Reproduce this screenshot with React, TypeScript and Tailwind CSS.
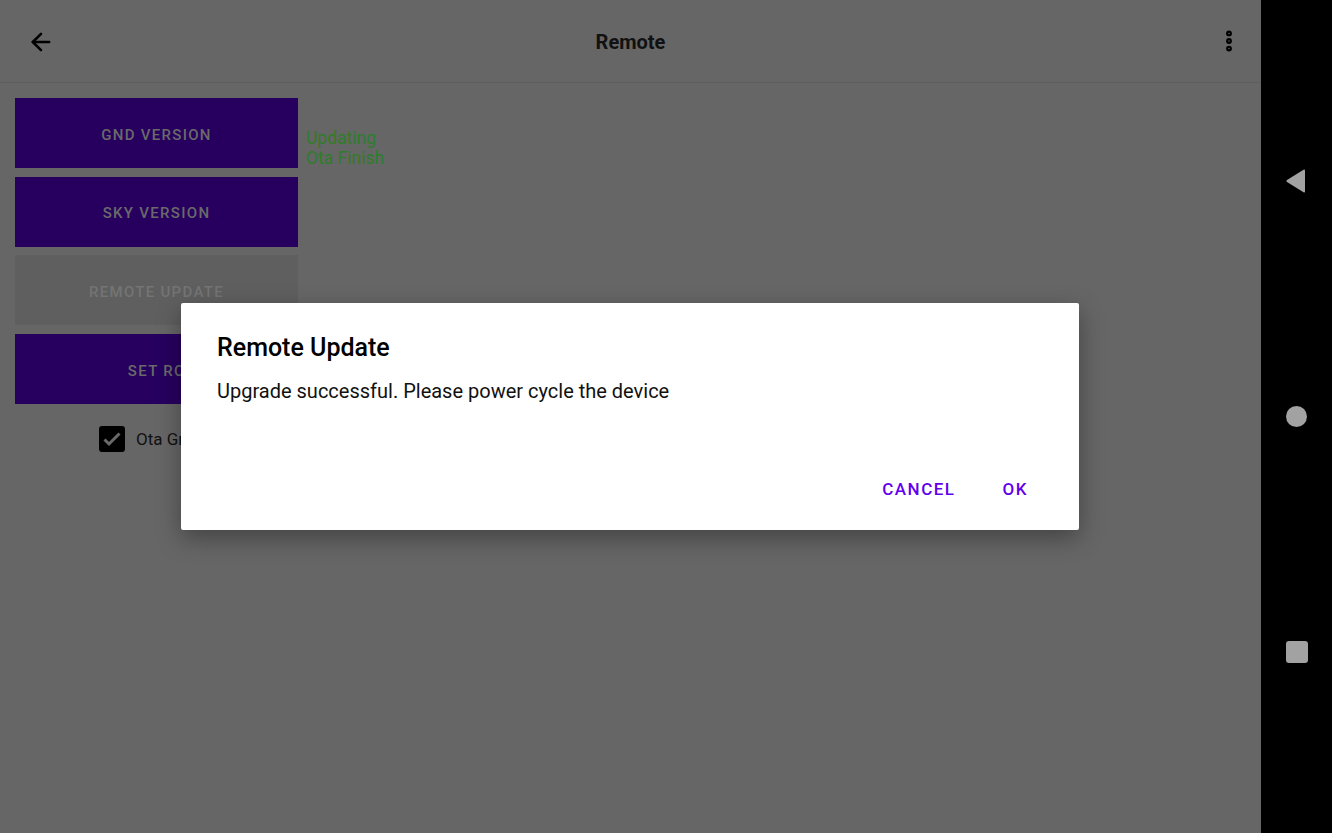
import { ArrowLeft, EllipsisVertical } from "lucide-react";

function ActionButton({ label, disabled }: { label: string; disabled?: boolean }) {
  return (
    <div
      className={
        "flex h-[70px] w-[283px] items-center justify-center pt-[4px] text-[15px] font-medium tracking-[1.3px] " +
        (disabled ? "bg-[#5f5f5f] text-[#747474]" : "bg-[#27005f] text-[#6a6a6a]")
      }
    >
      {label}
    </div>
  );
}

export default function App() {
  return (
    <div className="relative flex h-[833px] w-[1332px] overflow-hidden font-['Roboto',sans-serif]">
      {/* app screen */}
      <div className="flex w-[1261px] flex-col bg-[#666666]">
        <div className="flex h-[83px] items-center border-b border-[#5e5e5e] px-[27px]">
          <div className="w-[40px] pt-[1px]">
            <ArrowLeft size={28} strokeWidth={2.2} className="text-black" />
          </div>
          <div className="flex-1 pt-[2px] text-center text-[20px] font-bold text-[#111]">Remote</div>
          <div className="flex w-[40px] justify-end">
            <EllipsisVertical size={26} strokeWidth={3.4} className="-mr-[8px] text-black" />
          </div>
        </div>

        <div className="flex gap-[8px] pl-[15px] pt-[15px]">
          <div className="flex flex-col gap-[8.6px]">
            <ActionButton label="GND VERSION" />
            <ActionButton label="SKY VERSION" />
            <ActionButton label="REMOTE UPDATE" disabled />
            <ActionButton label="SET RC" />
            <div className="mt-[14px] flex items-center gap-[11px] pl-[84px]">
              <div className="flex h-[26px] w-[26px] items-center justify-center rounded-[3px] bg-black">
                <svg width="26" height="26" viewBox="0 0 26 26">
                  <path d="M5.5 13.5l4.5 4.5L20.5 7.5" fill="none" stroke="#6a6a6a" strokeWidth="3" />
                </svg>
              </div>
              <span className="text-[17px] text-[#111]">Ota Ground</span>
            </div>
          </div>
          <div className="pt-[30px] text-[17.5px] leading-[20px] text-[#2f7d2a]">
            <div>Updating</div>
            <div>Ota Finish</div>
          </div>
        </div>
      </div>

      {/* navigation bar */}
      <div className="flex w-[71px] flex-col items-center bg-black pt-[168px]">
        <svg width="24" height="26" viewBox="0 0 24 26" className="ml-[-2px]">
          <path d="M21 2.5v21a1 1 0 0 1-1.5.8L3 14a1.2 1.2 0 0 1 0-2L19.5 1.7A1 1 0 0 1 21 2.5z" fill="#a2a2a2" />
        </svg>
        <div className="mt-[212px] h-[21px] w-[21px] rounded-full bg-[#a2a2a2]" />
        <div className="mt-[214px] h-[22px] w-[22px] rounded-[3px] bg-[#a2a2a2]" />
      </div>

      {/* dialog */}
      <div className="absolute left-[181px] top-[303px] flex h-[227px] w-[898px] flex-col rounded-[2px] bg-white shadow-[0_8px_24px_rgba(0,0,0,0.35)]">
        <div className="px-[36px] pt-[30px] text-[25px] font-medium leading-[30px] text-black">Remote Update</div>
        <div className="mt-[16px] px-[36px] text-[20px] leading-[24px] text-[#111]">
          Upgrade successful. Please power cycle the device
        </div>
        <div className="mt-auto flex justify-end gap-[47px] pb-[28px] pr-[51px] text-[17px] font-medium tracking-[1.5px] text-[#6200ee]">
          <span>CANCEL</span>
          <span>OK</span>
        </div>
      </div>
    </div>
  );
}
